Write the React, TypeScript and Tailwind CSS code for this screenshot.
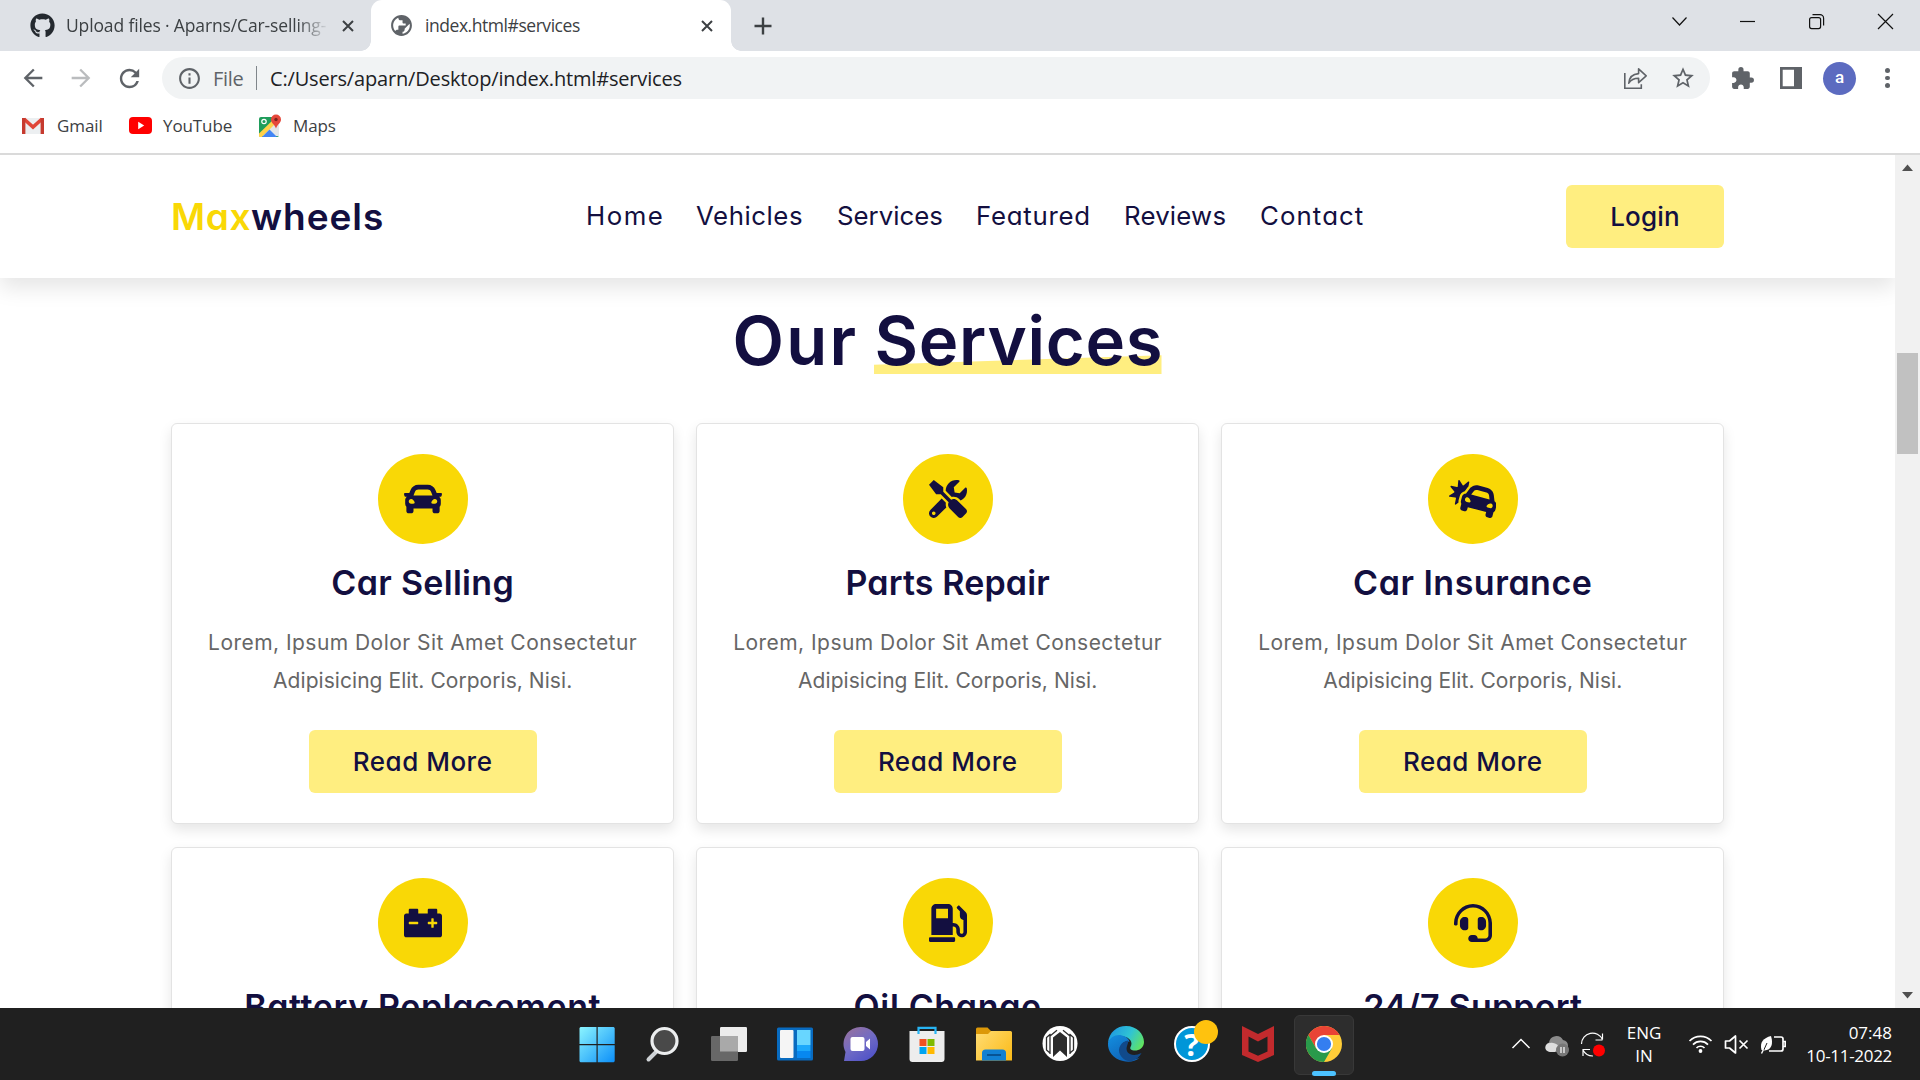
import type { ReactNode } from "react";
import { FaCar, FaTools, FaCarCrash, FaCarBattery, FaGasPump, FaHeadset, FaGithub } from "react-icons/fa";
import { MdExtension, MdStarBorder, MdPublic, MdRefresh, MdArrowBack, MdArrowForward, MdInfoOutline } from "react-icons/md";

function CloseGlyph() {
  return (
    <svg className="size-[12px] shrink-0" viewBox="0 0 12 12" stroke="#3c4043" strokeWidth="2" fill="none">
      <path d="M1 1l10 10M11 1L1 11" />
    </svg>
  );
}

function TabStrip() {
  return (
    <div className="flex h-[51px] items-stretch bg-[#dee1e6] text-[17.5px] text-[#3c4043]">
      <div className="flex w-[371px] items-center pl-[30px] pr-[17px]">
        <FaGithub className="size-[25px] shrink-0 text-[#24292f]" />
        <div className="ml-[11px] w-[263px] overflow-hidden whitespace-nowrap tracking-[-0.14px] [mask-image:linear-gradient(to_right,black_88%,transparent)]">
          Upload files · Aparns/Car-selling-
        </div>
        <div className="ml-auto flex">
          <CloseGlyph />
        </div>
      </div>
      <div className="relative flex w-[360px] items-center rounded-t-[11px] bg-white pl-[18px] pr-[18px]">
        <div className="absolute -left-[10px] bottom-0 size-[10px] bg-[radial-gradient(circle_at_0_0,#dee1e6_9.5px,white_10px)]" />
        <div className="absolute -right-[10px] bottom-0 size-[10px] bg-[radial-gradient(circle_at_100%_0,#dee1e6_9.5px,white_10px)]" />
        <MdPublic className="size-[25px] -scale-x-100 text-[#5f6368]" />
        <span className="ml-[11px] tracking-[-0.45px]">index.html#services</span>
        <div className="ml-auto flex">
          <CloseGlyph />
        </div>
      </div>
      <div className="flex flex-1 items-center pl-[23px]">
        <svg className="size-[18px]" viewBox="0 0 18 18" stroke="#3c4043" strokeWidth="2.4">
          <path d="M9 0.5v17M0.5 9h17" />
        </svg>
      </div>
      <svg className="h-[44px] w-[248px]" viewBox="0 0 248 44" fill="none" stroke="#111" strokeWidth="1.2">
        <path d="M0.5 17.5l7 7.5 7-7.5" />
        <path d="M68 21.5h15" />
        <rect x="137.6" y="17.6" width="11" height="11" rx="2" />
        <path d="M140.5 14.6h7.5a3.6 3.6 0 013.6 3.6v7.3" />
        <path d="M206 14l15 15M221 14l-15 15" />
      </svg>
    </div>
  );
}

function AddressBar() {
  return (
    <div className="flex h-[54px] items-center bg-white text-[#5f6368]">
      <div className="flex w-[162px] items-center pl-[19px]">
        <MdArrowBack className="size-[28px]" />
        <MdArrowForward className="ml-[20px] size-[28px] text-[#babcbe]" />
        <MdRefresh className="ml-[20px] size-[29px]" />
      </div>
      <div className="flex h-[42px] w-[1548px] items-center rounded-full bg-[#f1f3f4] pl-[15px] pr-[14px] text-[20px]">
        <MdInfoOutline className="size-[25px]" />
        <span className="ml-[11px] mt-px w-[31px] tracking-[-0.3px]">File</span>
        <div className="ml-[12px] h-[24px] w-px bg-[#80868b]" />
        <span className="ml-[13px] mt-px tracking-[-0.17px] text-[#202124]">C:/Users/aparn/Desktop/index.html#services</span>
        <svg className="ml-auto h-[24px] w-[25px]" viewBox="0 0 25 24" fill="none" stroke="#5f6368" strokeWidth="1.6">
          <path d="M1.8 7v15.2h16.5v-4" />
          <path d="M5.8 17.2c.5-6 4-9.2 9.8-9.6V2.8l7.6 7-7.6 6.8v-4.4c-4.4 0-7.600 1.300-9.800 5z" strokeLinejoin="round" />
        </svg>
        <MdStarBorder className="ml-[22px] size-[26px]" />
      </div>
      <MdExtension className="ml-[20px] size-[25px]" />
      <svg className="ml-[25px] h-[22px] w-[22px]" viewBox="0 0 22 22">
        <path d="M0 0h22v22H0zM2.700 2.700v16.600h11.300V2.700z" fill="#5f6368" fillRule="evenodd" />
      </svg>
      <div className="ml-[21px] flex size-[33px] items-center justify-center rounded-full bg-[#5c6bc0] pb-px font-['Roboto'] text-[17px] font-medium text-white">a</div>
      <div className="ml-[29px] flex flex-col gap-[3px]">
        <span className="size-[4.500px] rounded-full bg-[#5f6368]" />
        <span className="size-[4.500px] rounded-full bg-[#5f6368]" />
        <span className="size-[4.500px] rounded-full bg-[#5f6368]" />
      </div>
    </div>
  );
}

function Bookmarks() {
  return (
    <div className="flex h-[50px] items-center border-b-2 border-[#dadada] bg-white pb-[7px] pl-[21px] text-[17px] tracking-[-0.1px] text-[#3c4043]">
      <div className="flex h-[43px] w-full items-center">
        <svg className="h-[18px] w-[24px]" viewBox="0 0 24 18">
          <path d="M2 1h20v16H2z" fill="#eceff1" />
          <path d="M3 2l9 8 9-8" fill="none" stroke="#e04638" strokeWidth="3.600" />
          <path d="M1 1h3.400v16H1z" fill="#c63a2f" />
          <path d="M19.600 1H23v16h-3.400z" fill="#c63a2f" />
        </svg>
        <span className="ml-[12px] w-[46px]">Gmail</span>
        <svg className="ml-[26px] h-[17px] w-[23px]" viewBox="0 0 23 17">
          <rect width="23" height="17" rx="4" fill="#f00" />
          <path d="M9.200 4.800l6 3.700-6 3.700z" fill="#fff" />
        </svg>
        <span className="ml-[11px] w-[70px]">YouTube</span>
        <svg className="ml-[25px] h-[24px] w-[24px]" viewBox="0 0 24 24">
          <rect x="1" y="3" width="20" height="20" rx="2" fill="#1f9d5b" />
          <path d="M1 22L20 4l1 2v16z" fill="#e3e6e8" />
          <path d="M1 19.500L18 3l3 3L4 23H2a1 1 0 01-1-1z" fill="#ffd24a" />
          <path d="M4 23l7.500-7.500L19 23z" fill="#4285f4" />
          <circle cx="6" cy="7.500" r="2.200" fill="none" stroke="#fff" strokeWidth="1.200" />
          <path d="M18 .5a5 5 0 015 5c0 3.500-3.500 4.500-5 9-1.500-4.500-5-5.500-5-9a5 5 0 015-5z" fill="#e5483b" />
          <circle cx="18" cy="5.500" r="1.700" fill="#7b231e" />
        </svg>
        <span className="ml-[11px]">Maps</span>
      </div>
    </div>
  );
}

const navLinks = [
  { label: "Home", cls: "w-[110px] tracking-[1.500px]" },
  { label: "Vehicles", cls: "w-[141px] tracking-[0.550px]" },
  { label: "Services", cls: "w-[139px] tracking-[0px]" },
  { label: "Featured", cls: "w-[148px] tracking-[0.750px]" },
  { label: "Reviews", cls: "w-[136px] tracking-[0.200px]" },
  { label: "Contact", cls: "w-[105px] tracking-[1.100px]" },
];

function SiteHeader() {
  return (
    <header className="relative z-10 flex h-[123px] items-center justify-between bg-white px-[171px] text-[#130f40] shadow-[0_10px_20px_rgba(0,0,0,0.1)]">
      <div className="w-[214px] whitespace-nowrap text-[37px] font-semibold">
        <span className="tracking-[0.600px] text-[#f9d806]">Max</span>
        <span className="tracking-[0.950px]">wheels</span>
      </div>
      <nav className="flex w-[779px] whitespace-nowrap text-[25.800px]">
        {navLinks.map((l) => (
          <a key={l.label} className={l.cls}>{l.label}</a>
        ))}
      </nav>
      <button className="h-[63px] w-[158px] rounded-[6px] bg-[#ffee80] text-[26px] font-medium tracking-[0.200px]">Login</button>
    </header>
  );
}

const services: { title: string; cls: string; icon: ReactNode }[] = [
  { title: "Car Selling", cls: "tracking-[0.300px]", icon: <FaCar className="size-[38px]" /> },
  { title: "Parts Repair", cls: "tracking-[0.150px]", icon: <FaTools className="size-[38px]" /> },
  { title: "Car Insurance", cls: "tracking-[0.500px]", icon: <FaCarCrash className="h-[38px] w-[47.500px]" /> },
  { title: "Battery Replacement", cls: "tracking-[0.600px]", icon: <FaCarBattery className="size-[38px]" /> },
  { title: "Oil Change", cls: "tracking-[0.650px]", icon: <FaGasPump className="size-[38px]" /> },
  { title: "24/7 Support", cls: "tracking-[0.200px]", icon: <FaHeadset className="size-[38px]" /> },
];

function ServiceCard({ title, cls, icon }: { title: string; cls: string; icon: ReactNode }) {
  return (
    <div className="flex h-[401px] flex-col items-center whitespace-nowrap rounded-[6px] border border-[#e3e3e3] bg-white pt-[30px] text-[#130f40] shadow-[0_6px_13px_rgba(0,0,0,0.1)]">
      <div className="flex size-[90px] items-center justify-center rounded-full bg-[#f9d806]">{icon}</div>
      <h3 className={"mt-[14px] text-[34px] font-semibold leading-[50px] " + cls}>{title}</h3>
      <p className="mt-[16px] flex flex-col items-center text-[21px] leading-[38px] text-[#666]">
        <span className="tracking-[0.460px]">Lorem, Ipsum Dolor Sit Amet Consectetur</span>
        <span className="tracking-[0.050px]">Adipisicing Elit. Corporis, Nisi.</span>
      </p>
      <button className="mt-[30px] h-[63px] w-[228px] rounded-[6px] bg-[#ffee80] text-[26px] font-medium tracking-[0.500px]">Read More</button>
    </div>
  );
}

function Page() {
  return (
    <div className="flex h-[853px] overflow-hidden bg-white">
      <div className="w-[1895px] overflow-hidden font-['Inter',sans-serif] [font-feature-settings:'cv11']">
        <SiteHeader />
        <h1 className="mt-[22px] flex h-[83px] items-center justify-center whitespace-nowrap text-[67px] font-semibold text-[#130f40]">
          <span className="w-[142px] tracking-[2.200px]">Our</span>
          <span className="relative w-[288px] tracking-[0.700px]">
            <span className="absolute -left-px bottom-[17.500px] h-[19px] w-[288px] bg-[#ffee80] [clip-path:polygon(0_50%,100%_0,100%_100%,0_100%)]" />
            <span className="relative">Services</span>
          </span>
        </h1>
        <div className="mt-[40px] grid grid-cols-3 gap-x-[22.500px] gap-y-[23px] pl-[171.400px] pr-[171px]">
          {services.map((s) => (
            <ServiceCard key={s.title} {...s} />
          ))}
        </div>
      </div>
      <div className="flex w-[25px] flex-col items-center bg-[#f1f1f1] py-[9px]">
        <svg className="h-[7px] w-[11px]" viewBox="0 0 11 7"><path d="M0 7l5.500-6.500L11 7z" fill="#505050" /></svg>
        <div className="mt-[182px] h-[101px] w-[21px] bg-[#c1c1c1]" />
        <svg className="mt-auto h-[7px] w-[11px]" viewBox="0 0 11 7"><path d="M0 0l5.500 6.500L11 0z" fill="#505050" /></svg>
      </div>
    </div>
  );
}

function TaskIcon({ children }: { children: ReactNode }) {
  return (
    <div className="flex w-[66.100px] items-center justify-center pt-[2px]">
      <svg className="size-[44px]" viewBox="0 0 44 44" fill="none">{children}</svg>
    </div>
  );
}

function Taskbar() {
  return (
    <div className="flex h-[72px] bg-[#202020] text-white">
      <div className="flex w-[1357px] pl-[564px]">
        <TaskIcon>
          <defs>
            <linearGradient id="win" x1="4" y1="4" x2="40" y2="40" gradientUnits="userSpaceOnUse"><stop stopColor="#8df6ff" /><stop offset="1" stopColor="#0a8df8" /></linearGradient>
          </defs>
          <path d="M5.500 4h16v17h-17V5zM22.700 4h16l1 1v16h-17zM4.500 22.200h17v17h-16l-1-1zM22.700 22.200h17v16l-1 1h-16z" fill="url(#win)" />
        </TaskIcon>
        <TaskIcon>
          <path d="M16.500 27.500l-9 9" stroke="#cfd3d6" strokeWidth="4" strokeLinecap="round" />
          <circle cx="23.500" cy="18" r="12.500" fill="#494949" stroke="#eceeef" strokeWidth="3.200" />
        </TaskIcon>
        <TaskIcon>
          <rect x="13" y="4" width="27" height="25" rx="1.200" fill="#ececec" />
          <rect x="4" y="13" width="27" height="25" rx="1.200" fill="#686868" />
          <path d="M13 13h18v15.500H13z" fill="#a9a9a9" />
        </TaskIcon>
        <TaskIcon>
          <rect x="4" y="4.500" width="36" height="33" rx="1.500" fill="#086bc0" />
          <rect x="7" y="7" width="13.500" height="28" rx="1" fill="#f5f5f5" />
          <path d="M24 7h13.500v15H24z" fill="#68d6ff" />
          <path d="M24 22h13.500v6H24z" fill="#1ba8fb" />
          <path d="M24 28h13.500v7H24z" fill="#0788f0" />
        </TaskIcon>
        <TaskIcon>
          <defs>
            <linearGradient id="chat" x1="8" y1="6" x2="30" y2="38" gradientUnits="userSpaceOnUse"><stop stopColor="#96719f" /><stop offset=".5" stopColor="#716bc4" /><stop offset="1" stopColor="#4f52c8" /></linearGradient>
          </defs>
          <path d="M22 4a17 17 0 110 34H5l1.500-9A17 17 0 0122 4z" fill="url(#chat)" />
          <rect x="11.500" y="14" width="14" height="14" rx="2" fill="#fff" />
          <path d="M27 19l4-3.500v11L27 23z" fill="#fff" />
        </TaskIcon>
        <TaskIcon>
          <path d="M4.500 8h35v28a3 3 0 01-3 3h-29a3 3 0 01-3-3z" fill="#ededed" />
          <path d="M13.500 11V4.800h17V11" stroke="#27b4f3" strokeWidth="2.200" />
          <path d="M14.500 16h7v7h-7z" fill="#f25022" />
          <path d="M22.500 16h7v7h-7z" fill="#7fba00" />
          <path d="M14.500 24h7v7h-7z" fill="#00a4ef" />
          <path d="M22.500 24h7v7h-7z" fill="#ffb900" />
        </TaskIcon>
        <TaskIcon>
          <defs>
            <linearGradient id="fold" x1="4" y1="8" x2="40" y2="38" gradientUnits="userSpaceOnUse"><stop stopColor="#ffdc73" /><stop offset="1" stopColor="#fbba17" /></linearGradient>
          </defs>
          <path d="M4 6a1.500 1.500 0 011.500-1.500h10L19 8v6H4z" fill="#dc9808" />
          <path d="M4 11h12l3-3h19.500A1.500 1.500 0 0140 9.500v28H4z" fill="url(#fold)" />
          <path d="M10 37.500V30a3.500 3.500 0 013.500-3.500h17A3.500 3.500 0 0134 30v7.500z" fill="#1180d3" />
          <path d="M15 32h14" stroke="#075394" strokeWidth="2" />
        </TaskIcon>
        <TaskIcon>
          <circle cx="22" cy="20.500" r="17.500" fill="#fff" />
          <path d="M15 34V14.500l7-5.500 7 5.500V34l-7-6.500z" fill="#2c2c2c" />
          <path d="M12 31V13L19 7.200M32 31V13L25 7.200M12 30l-3.500-3V14.500l4-3.500M32 30l3.500-3V14.500l-4-3.500" stroke="#2c2c2c" strokeWidth="1.300" />
        </TaskIcon>
        <TaskIcon>
          <defs>
            <linearGradient id="edgeA" x1="8" y1="6" x2="40" y2="24" gradientUnits="userSpaceOnUse"><stop stopColor="#1f9be0" /><stop offset=".5" stopColor="#30c4d3" /><stop offset="1" stopColor="#69e84f" /></linearGradient>
            <linearGradient id="edgeB" x1="6" y1="14" x2="20" y2="38" gradientUnits="userSpaceOnUse"><stop stopColor="#138bdc" /><stop offset="1" stopColor="#0f64b8" /></linearGradient>
          </defs>
          <path d="M4 20C5 9 13 3 22 3c11 0 18 8 18 16 0 6-5 8.500-9 8.500-3.500 0-5.500-1.500-4.500-3.500 3-5-1-9.500-7-10.500C12 12 6 16 4 20z" fill="url(#edgeA)" />
          <path d="M4 20c2-6 8-9 14-7.500 4 .8 7 3.500 7.500 6.500-6-2-9 3-7.500 8.500 2 7 10 11 18 7C31 39 24 39.500 19 38 9 36 3.500 28 4 20z" fill="url(#edgeB)" />
          <path d="M24 17.500c-7 1-11 8-8 14 2.500 5 8 7.500 12 6.500 4-1.200 7.500-4 9.500-8-9 4.500-17 .5-14.500-7 .3-1.500 1.500-2.500 1-5.500z" fill="#114a8b" />
        </TaskIcon>
        <div className="relative flex w-[66.100px] items-center justify-center">
          <div className="flex size-[36px] items-center justify-center rounded-full border-2 border-white bg-[#0096d8] font-['Noto_Sans'] text-[31px] font-bold leading-none">?</div>
          <div className="absolute left-[35px] top-[12px] size-[24px] rounded-full bg-[#ffc20e]" />
        </div>
        <TaskIcon>
          <path d="M6 3l16 8 16-8v29l-16 7-16-7z" fill="#c22a2d" />
          <path d="M12.500 13.500l9.500 5 9.500-5v15L22 32.800l-9.500-4.300z" fill="#202020" />
        </TaskIcon>
        <div className="relative flex w-[66.100px] items-center justify-center">
          <div className="absolute left-[3px] top-[7px] size-[60px] rounded-[6px] border border-[#383838] bg-[#2d2d2d]" />
          <svg className="relative size-[36px]" viewBox="-18 -18 36 36">
            <circle r="18" fill="#ffcd38" />
            <path d="M0-9h15.600A18 18 0 00-15.600-9L-7.800 4.500z" fill="#e94435" />
            <path d="M-15.600-9A18 18 0 000 18L7.800 4.500-7.800 4.500z" fill="#299a4b" />
            <circle r="9" fill="#fff" />
            <circle r="7.100" fill="#347ef0" />
          </svg>
          <div className="absolute bottom-[4px] left-[21px] h-[5px] w-[24px] rounded-full bg-[#4cc2ff]" />
        </div>
      </div>
      <div className="flex flex-1 items-center pl-[154px] pr-[28px]">
        <svg className="h-[32px] w-[100px]" viewBox="0 0 100 32" fill="none">
          <path d="M1.500 20l8.500-8.500 8.500 8.500" stroke="#fff" strokeWidth="1.500" />
          <path d="M40 24a5 5 0 01-2-9.500 7.500 7.500 0 0114-2.500 6 6 0 015 6v6z" fill="#8c8c8c" />
          <path d="M39 24c-7-1-5.500-9 0-9 5-1 7 2 9 3l-4 6z" fill="#dedede" />
          <circle cx="51.500" cy="22" r="6.500" fill="#777" />
          <path d="M50 19v6M53 19v6" stroke="#fff" strokeWidth="1.200" />
          <path d="M70.500 16a11 11 0 0121-4.500V5.500M91.500 12h-7M72 28v-6.500h7M72 22a11 11 0 0010 6" stroke="#fff" strokeWidth="1.200" />
          <circle cx="88" cy="22.500" r="6" fill="#f00" />
        </svg>
        <div className="ml-[15px] w-[36px] text-center text-[17px] leading-[23px] tracking-[-0.1px]">
          <div>ENG</div>
          <div>IN</div>
        </div>
        <svg className="ml-[26px] h-[28px] w-[98px]" viewBox="0 0 98 28" fill="none" stroke="#fff" strokeWidth="1.700">
          <path d="M1.500 11a15.500 15.500 0 0122 0M5 14.600a10.500 10.500 0 0115 0M8.500 18a5.500 5.500 0 018 0" />
          <circle cx="12.500" cy="21" r="1.900" fill="#fff" stroke="none" />
          <path d="M37.500 11h4l6-5v17l-6-5h-4z" strokeLinejoin="round" />
          <path d="M51.500 10.500l8 8M59.500 10.500l-8 8" />
          <path d="M86 7h7a2 2 0 012 2v10a2 2 0 01-2 2H81M95 11.500h2.200v5H95" />
          <path d="M73.500 20c-2-8 2-12 9.500-14 2.500 8 .5 14-6.500 14.500z" fill="#fff" stroke="none" />
          <path d="M74 24l5-11" stroke="#202020" strokeWidth="1" />
          <path d="M73.500 23.500l2-4" strokeWidth="1.400" />
        </svg>
        <div className="ml-auto whitespace-nowrap text-right text-[17px] leading-[23px]">
          <div>07:48</div>
          <div className="tracking-[-0.300px]">10-11-2022</div>
        </div>
      </div>
    </div>
  );
}

export default function App() {
  return (
    <div className="h-[1080px] w-[1920px] overflow-hidden bg-white font-['Open_Sans',sans-serif]">
      <TabStrip />
      <AddressBar />
      <Bookmarks />
      <Page />
      <Taskbar />
    </div>
  );
}
